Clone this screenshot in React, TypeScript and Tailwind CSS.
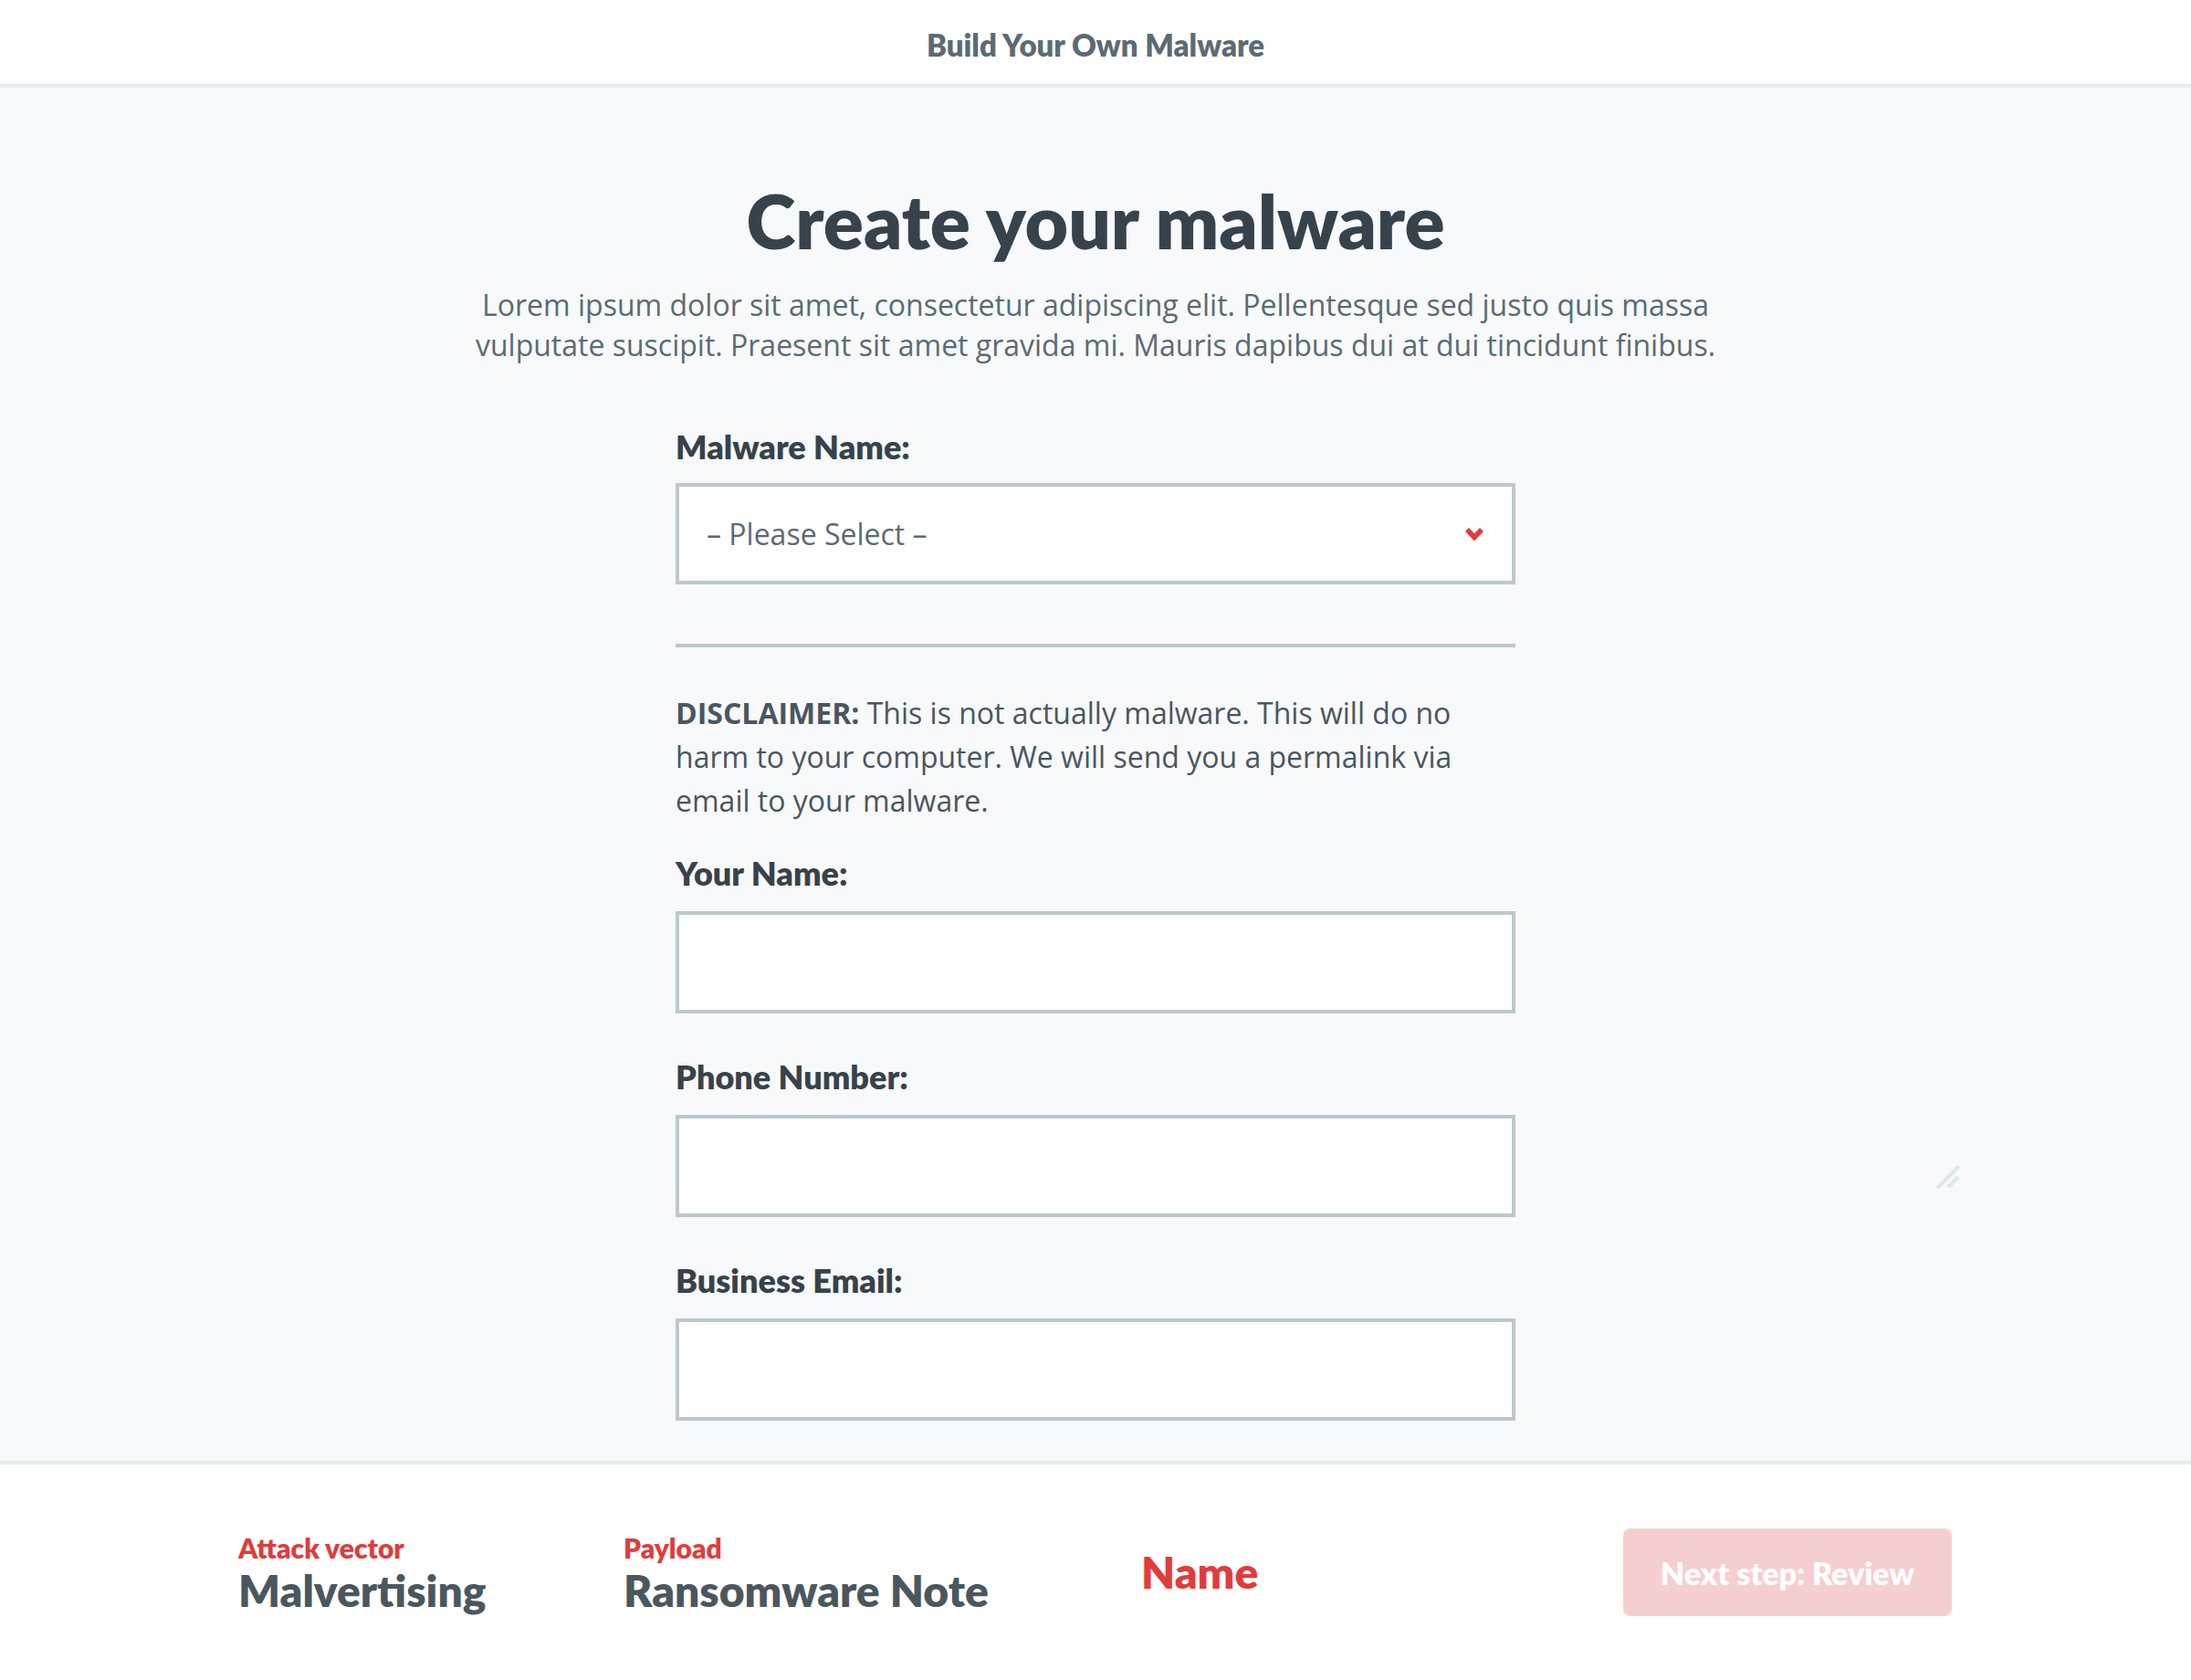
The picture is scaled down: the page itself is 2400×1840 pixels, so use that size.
import { useState } from 'react';

const lato = { fontFamily: 'Lato, "Open Sans", sans-serif' };

function Field({ label, className = '' }: { label: string; className?: string }) {
  const [value, setValue] = useState('');
  return (
    <div className={className}>
      <label className="block text-[36px] leading-[44px] font-extrabold text-[#37424a] mb-5" style={lato}>
        {label}
      </label>
      <input
        value={value}
        onChange={(e) => setValue(e.target.value)}
        className="block w-full h-[112px] border-4 border-[#bcc8ce] bg-white px-[30px] text-[32px] text-[#37424a] outline-none"
      />
    </div>
  );
}

function Step({ label, value, className = '' }: { label: string; value: string; className?: string }) {
  return (
    <div className={className} style={lato}>
      <div className="text-[30px] leading-[36px] font-extrabold text-[#e03c3c]">{label}</div>
      <div className="text-[48px] leading-[58px] font-extrabold text-[#4a575e]">{value}</div>
    </div>
  );
}

export default function App() {
  return (
    <div className="w-[2400px] h-[1840px] flex flex-col bg-[#f7f9fa] overflow-hidden" style={{ fontFamily: '"Open Sans", sans-serif' }}>
      {/* Top bar */}
      <header className="h-[96px] shrink-0 bg-white border-b-4 border-[#e6edf0] flex items-center justify-center pt-[8px]">
        <span className="text-[33px] font-extrabold text-[#5b6b74]" style={lato}>
          Build Your Own Malware
        </span>
      </header>

      {/* Form area */}
      <main className="relative flex-1 overflow-hidden pt-[96px]">
        <h1 className="text-center text-[82px] leading-[98px] font-extrabold text-[#37424a]" style={lato}>
          Create your malware
        </h1>
        <p className="mx-auto mt-[22px] w-[1480px] text-center text-[32px] leading-[44px] text-[#5b6b74]">
          Lorem ipsum dolor sit amet, consectetur adipiscing elit. Pellentesque sed justo quis massa
          <br />
          vulputate suscipit. Praesent sit amet gravida mi. Mauris dapibus dui at dui tincidunt finibus.
        </p>

        <div className="mx-auto mt-[67px] w-[920px]">
          <label className="block text-[36px] leading-[44px] font-extrabold text-[#37424a] mb-[18px]" style={lato}>
            Malware Name:
          </label>
          <div className="h-[111px] border-4 border-[#bcc8ce] bg-white flex items-center pl-[30px] pr-[30px]">
            <span className="flex-1 text-[32px] text-[#5b6b74]">– Please Select –</span>
            <svg width="22" height="15" viewBox="0 0 22 15" className="shrink-0">
              <polyline points="3,3 11,11.5 19,3" fill="none" stroke="#e03c3c" strokeWidth="5.5" />
            </svg>
          </div>

          <div className="mt-[65px] h-[4px] bg-[#bcc8ce]" />

          <p className="mt-[48px] text-[32px] leading-[48px] text-[#4a5660]">
            <strong className="font-bold">DISCLAIMER:</strong> This is not actually malware. This will do no harm to your
            computer. We will send you a permalink via email to your malware.
          </p>

          <Field label="Your Name:" className="mt-[33px]" />
          <Field label="Phone Number:" className="mt-[47px]" />
          <Field label="Business Email:" className="mt-[47px]" />
        </div>

        {/* resize grip */}
        <svg width="30" height="30" viewBox="0 0 30 30" className="absolute left-[2119px] top-[1178px]">
          <line x1="3" y1="27" x2="27" y2="3" stroke="#dde7e9" strokeWidth="4" />
          <line x1="15" y1="26" x2="26" y2="15" stroke="#dde7e9" strokeWidth="4" />
        </svg>
      </main>

      {/* Bottom steps bar */}
      <footer className="h-[240px] shrink-0 bg-white border-t-4 border-[#e6edf0] flex items-center pl-[261px] pr-[262px]">
        <Step label="Attack vector" value="Malvertising" className="w-[422px] mt-[4px]" />
        <Step label="Payload" value="Ransomware Note" className="w-[567px] mt-[4px]" />
        <div className="text-[48px] font-extrabold text-[#e03c3c]" style={lato}>
          Name
        </div>
        <button
          disabled
          className="ml-auto w-[360px] h-[96px] rounded-[8px] bg-[#f5cfcf] text-white text-[34px] font-extrabold"
          style={lato}
        >
          Next step: Review
        </button>
      </footer>
    </div>
  );
}
